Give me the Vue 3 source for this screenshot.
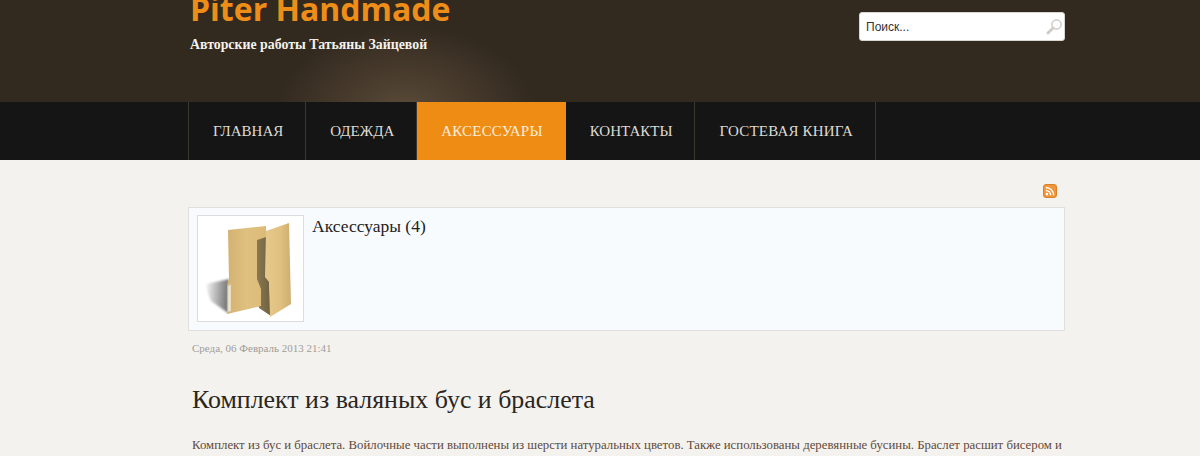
<script setup>
const menu = [
  { label: "Главная" },
  { label: "Одежда" },
  { label: "Аксессуары", active: true },
  { label: "Контакты" },
  { label: "Гостевая книга" }
];
</script>

<template>
  <div class="page">
    <header class="top">
      <div class="wrap top__inner">
        <div class="brand">
          <div class="brand__name">Piter Handmade</div>
          <div class="brand__slogan">Авторские работы Татьяны Зайцевой</div>
        </div>
        <div class="search">
          <span class="search__text">Поиск...</span>
          <svg class="search__icon" width="17" height="17" viewBox="0 0 17 17">
            <circle cx="10.5" cy="6.5" r="4.6" fill="none" stroke="#d4d2cc" stroke-width="1.7" />
            <path d="M7 10 L2 15" stroke="#cfcdc6" stroke-width="3" stroke-linecap="round" />
          </svg>
        </div>
      </div>
    </header>

    <nav class="nav">
      <ul class="wrap nav__list">
        <li v-for="item in menu" :key="item.label" class="nav__item" :class="{ 'nav__item--active': item.active }">
          {{ item.label }}
        </li>
      </ul>
    </nav>

    <main class="wrap content">
      <div class="feed">
        <svg width="14" height="14" viewBox="0 0 14 14">
          <rect x="0.5" y="0.5" width="13" height="13" rx="2.5" fill="#f0953a" stroke="#d9822b" />
          <circle cx="3.9" cy="10.1" r="1.3" fill="#fff" />
          <path d="M2.8 6.4 A4.8 4.8 0 0 1 7.6 11.2" fill="none" stroke="#fff" stroke-width="1.5" />
          <path d="M2.8 3.4 A7.8 7.8 0 0 1 10.6 11.2" fill="none" stroke="#fff" stroke-width="1.5" />
        </svg>
      </div>

      <section class="category">
        <div class="thumb">
          <svg width="105" height="105" viewBox="0 0 105 105">
            <defs>
              <linearGradient id="back" x1="0" y1="0" x2="1" y2="0">
                <stop offset="0" stop-color="#d2b172" />
                <stop offset="0.5" stop-color="#e0c07f" />
                <stop offset="1" stop-color="#dcbb7a" />
              </linearGradient>
              <linearGradient id="front" x1="0" y1="0" x2="1" y2="0">
                <stop offset="0" stop-color="#e6c98c" />
                <stop offset="0.6" stop-color="#e0c080" />
                <stop offset="1" stop-color="#cdae70" />
              </linearGradient>
              <linearGradient id="inner" x1="0" y1="0" x2="1" y2="0">
                <stop offset="0" stop-color="#8d7b52" />
                <stop offset="1" stop-color="#6f6140" />
              </linearGradient>
              <linearGradient id="shade" x1="1" y1="0.5" x2="0" y2="0.4">
                <stop offset="0" stop-color="#6e6e6e" />
                <stop offset="0.6" stop-color="#bdbdbd" />
                <stop offset="1" stop-color="#f2f2f2" />
              </linearGradient>
              <filter id="soft" x="-20%" y="-20%" width="140%" height="140%">
                <feGaussianBlur stdDeviation="1" />
              </filter>
            </defs>
            <path d="M31 63 L8 68 Q9 77 13 85 L30 97 Z" fill="url(#shade)" filter="url(#soft)" />
            <path d="M57 24 L69 20 L73 100 L61 92 L57 60 Z" fill="url(#inner)" />
            <path d="M30 14 L68 10 L68 21 L59 24 L59 63 L63 73 L63 90 L29 98 L29 69 L31 63 Z" fill="url(#back)" />
            <path d="M30 70 L33 68 L33 95 L30 96 Z" fill="#efe6c8" stroke="#c4bfa8" stroke-width="0.5" />
            <path d="M68 15 L91 7 L93 88 L72 101 L71 66 L67 61 Z" fill="url(#front)" />
          </svg>
        </div>
        <h2 class="category__title">Аксессуары (4)</h2>
      </section>

      <div class="date">Среда, 06 Февраль 2013 21:41</div>
      <h1 class="post__title">Комплект из валяных бус и браслета</h1>
      <p class="post__text">Комплект из бус и браслета. Войлочные части выполнены из шерсти натуральных цветов. Также использованы деревянные бусины. Браслет расшит бисером и</p>
    </main>
  </div>
</template>

<style scoped>
.page {
  height: 456px;
  overflow: hidden;
  background: #f4f2ef;
}

.wrap {
  width: 877px;
  margin-left: 188px;
}

.top {
  height: 102px;
  overflow: hidden;
  background:
    radial-gradient(ellipse 130px 85px at 405px 110px, #5a4a38 0%, rgba(90, 74, 56, 0.6) 40%, rgba(90, 74, 56, 0) 100%),
    #32291f;
}

.top__inner {
  display: flex;
  justify-content: space-between;
  align-items: flex-start;
}

.brand {
  margin: -13px 0 0 2px;
}

.brand__name {
  font-family: "Open Sans", sans-serif;
  font-weight: 700;
  font-size: 32px;
  line-height: 44px;
  color: #ee8d17;
}

.brand__slogan {
  margin-top: 6px;
  font-family: "Liberation Serif", serif;
  font-weight: 700;
  font-size: 13.85px;
  line-height: 16px;
  color: #f4f2ea;
}

.search {
  display: flex;
  justify-content: space-between;
  align-items: center;
  box-sizing: border-box;
  width: 206px;
  height: 29px;
  margin-top: 12px;
  padding: 0 1px 0 6px;
  background: #fff;
  border-radius: 3px;
  border: 1px solid #d8d6d0;
}

.search__text {
  font-family: "Liberation Sans", sans-serif;
  font-size: 12px;
  color: #333;
}

.nav {
  height: 58px;
  background: #151515;
}

.nav__list {
  display: flex;
  height: 58px;
  margin-top: 0;
  margin-bottom: 0;
  padding: 0;
  list-style: none;
  border-left: 1px solid #3a3630;
  box-sizing: border-box;
}

.nav__item {
  display: flex;
  align-items: center;
  padding: 0 22px 0 24px;
  border-right: 1px solid #3a3630;
  font-family: "Liberation Serif", serif;
  font-size: 15px;
  text-transform: uppercase;
  color: #dedbd4;
}

.nav__item:last-child,
.nav__item--active {
  letter-spacing: 0.2px;
}

.nav__item--active {
  background: #ef8c14;
  color: #fbeedd;
  border-right-color: #ef8c14;
}

.content {
  padding-top: 24px;
}

.feed {
  display: flex;
  justify-content: flex-end;
  padding-right: 8px;
  height: 14px;
}

.feed svg {
  display: block;
}

.category {
  display: flex;
  align-items: flex-start;
  gap: 8px;
  box-sizing: border-box;
  height: 124px;
  margin-top: 9px;
  padding: 7px 8px;
  background: #f8fbfe;
  border: 1px solid #e0dfdb;
}

.thumb {
  display: flex;
  align-items: center;
  justify-content: center;
  box-sizing: border-box;
  width: 107px;
  height: 107px;
  background: #fff;
  border: 1px solid #dcdcdc;
}

.category__title {
  margin: 1px 0 0;
  font-family: "Liberation Serif", serif;
  font-weight: 400;
  font-size: 17.5px;
  line-height: 21px;
  color: #222;
}

.date {
  margin: 11px 0 0 4px;
  font-family: "Liberation Serif", serif;
  font-size: 11px;
  line-height: 13px;
  color: #a09d97;
}

.post__title {
  margin: 30px 0 0 4px;
  font-family: "Liberation Serif", serif;
  font-weight: 400;
  font-size: 25.9px;
  line-height: 30px;
  color: #2a2620;
}

.post__text {
  margin: 22px 0 0 4px;
  white-space: nowrap;
  font-family: "Liberation Serif", serif;
  font-size: 12.8px;
  line-height: 16px;
  color: #5f4a3b;
}
</style>

<style>
body {
  margin: 0;
}
</style>
